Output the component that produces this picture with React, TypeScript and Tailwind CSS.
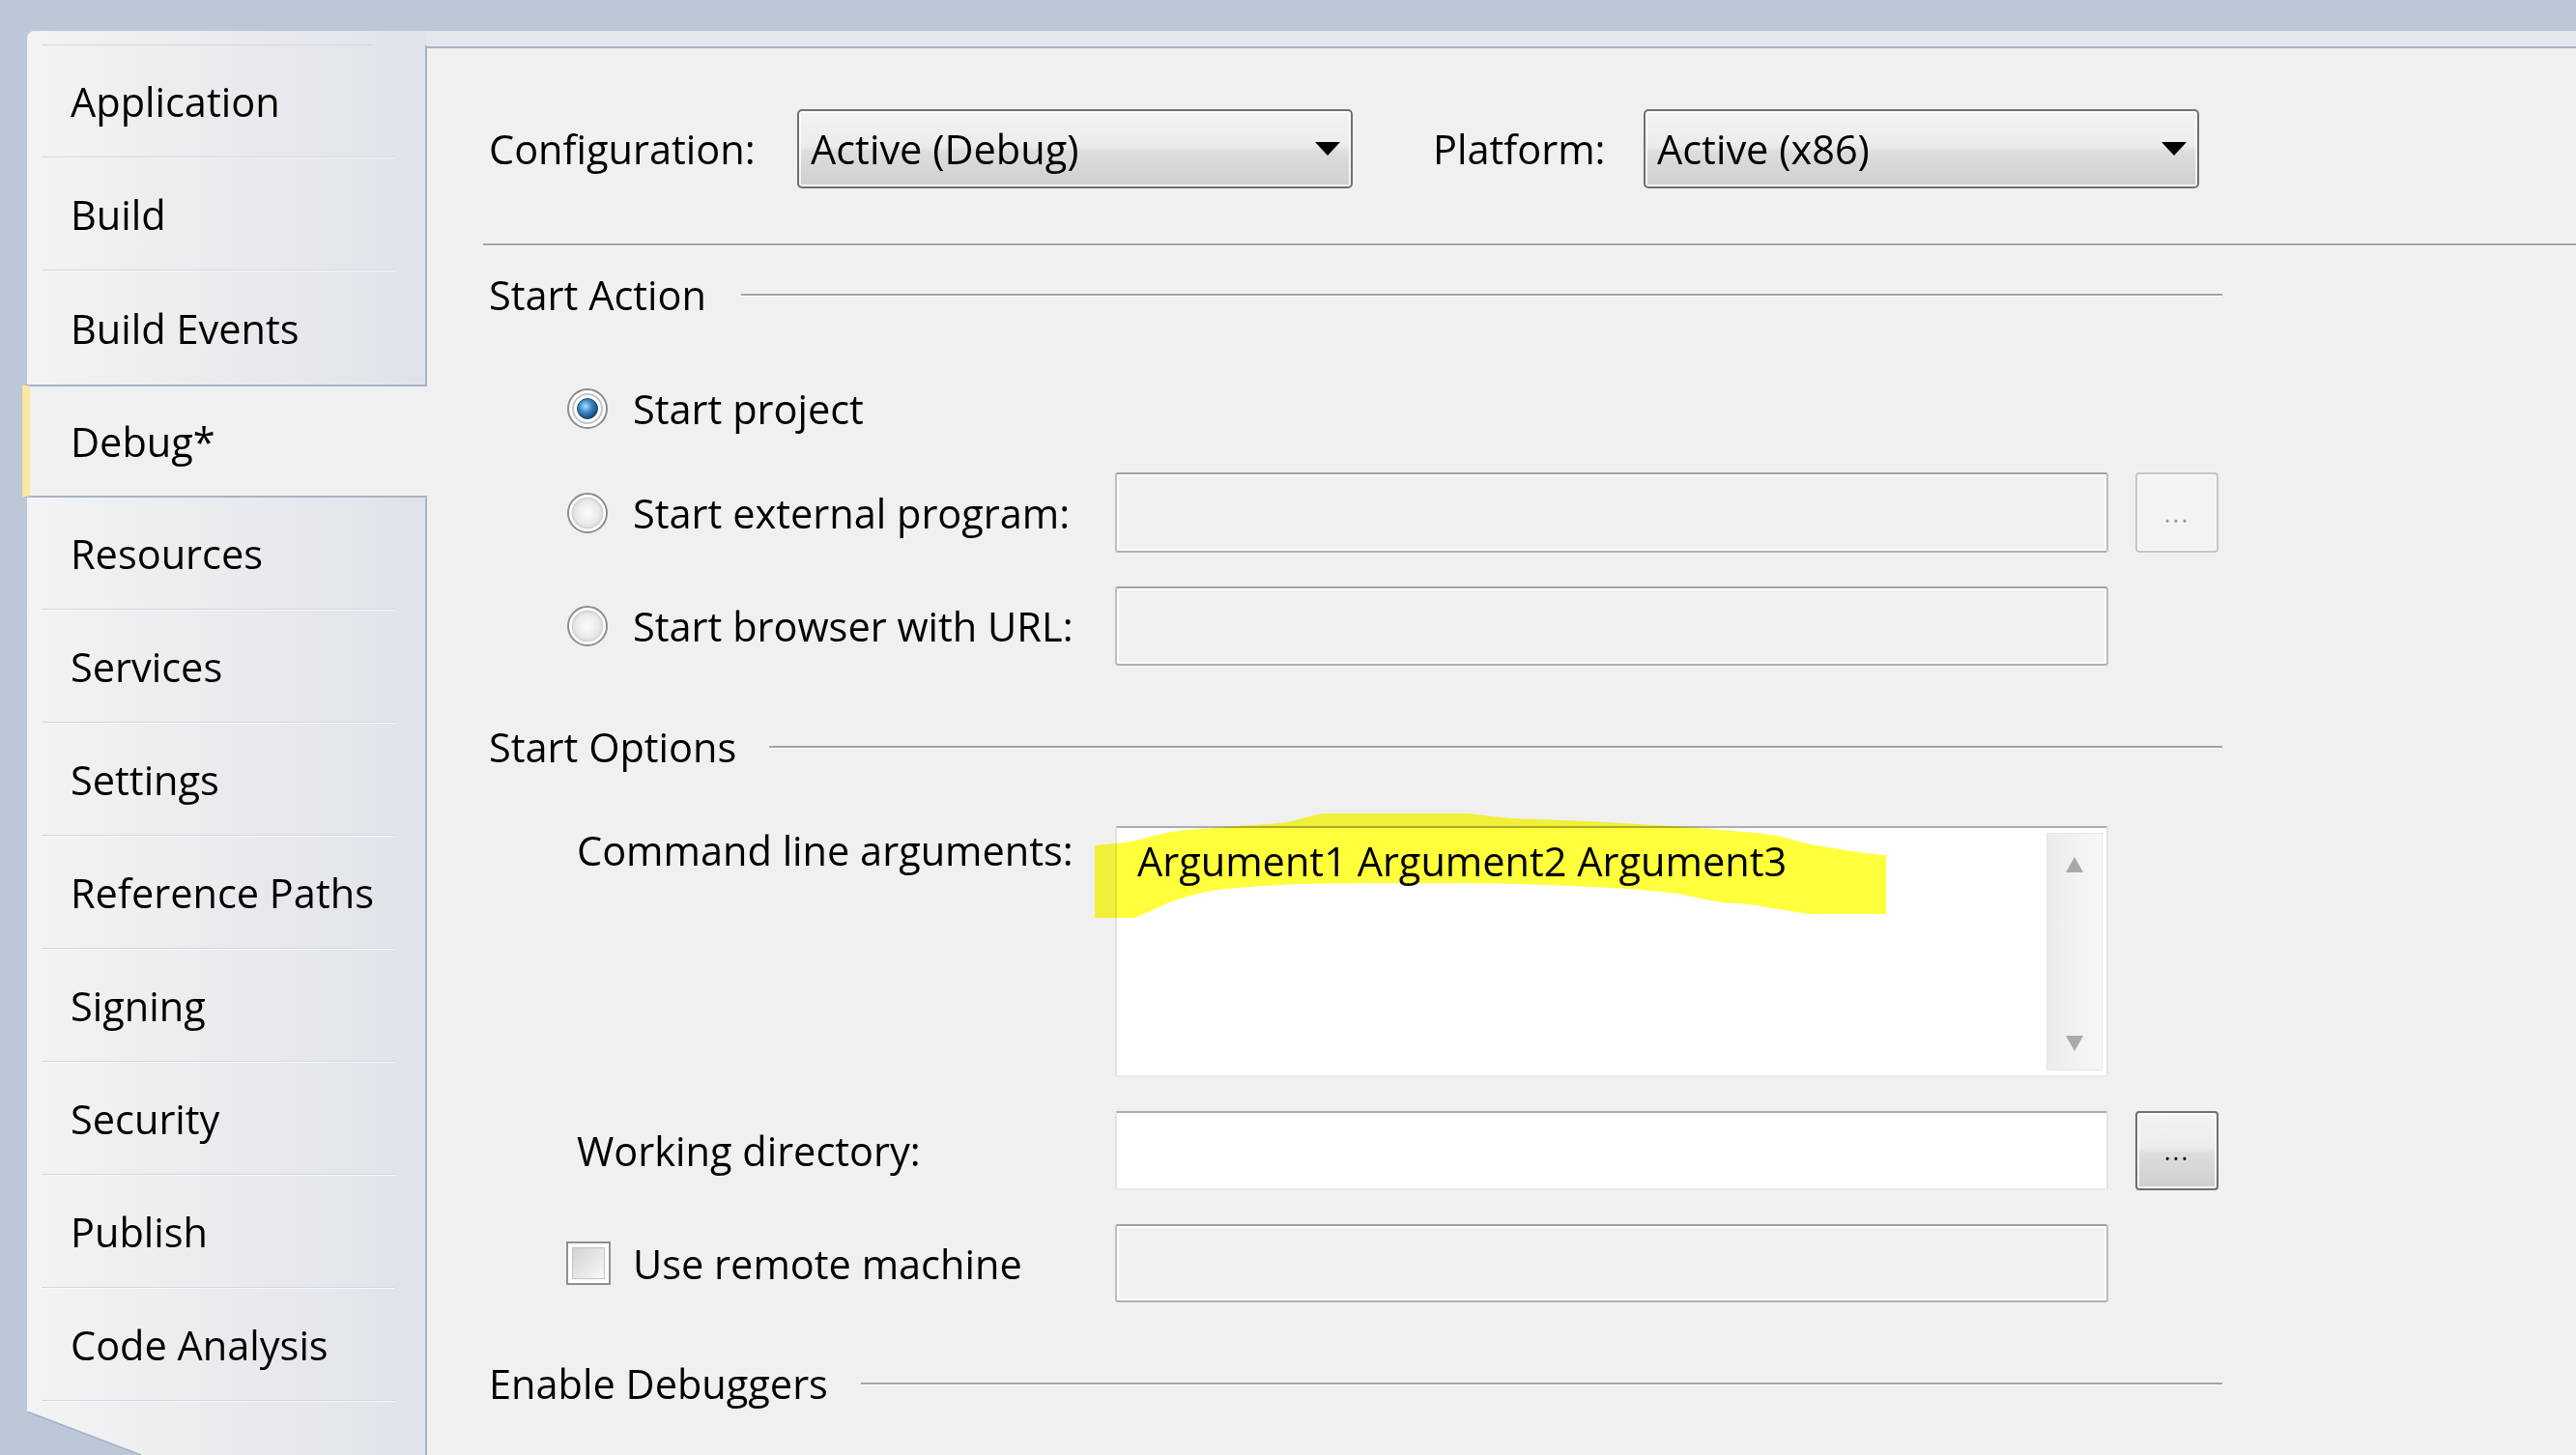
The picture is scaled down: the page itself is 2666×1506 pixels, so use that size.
import React from "react";

const ITEMS = [
  "Application",
  "Build",
  "Build Events",
  "Debug*",
  "Resources",
  "Services",
  "Settings",
  "Reference Paths",
  "Signing",
  "Security",
  "Publish",
  "Code Analysis",
];
const ACTIVE = 3;

function Sidebar() {
  return (
    <div className="relative w-[414px] h-full shrink-0 rounded-tl-[8px] bg-[linear-gradient(to_right,#f3f3f3,#dfe3e9)] flex flex-col">
      <div className="h-[15px] shrink-0 flex flex-col justify-end border-r-2 border-transparent">
        <div className="h-px ml-[15px] mr-[55px] bg-[#d3d8df]" />
      </div>
      {ITEMS.map((t, i) =>
        i === ACTIVE ? (
          <div
            key={t}
            className="h-[117px] shrink-0 -ml-[5px] w-[419px] rounded-l-[3px] border-y-2 border-[#a7b4c7] border-l-[8px] border-l-[#fbe6a2] bg-[#f0f0f0] flex items-center pl-[42px] whitespace-nowrap"
          >
            {t}
          </div>
        ) : (
          <div key={t} className="h-[117px] shrink-0 flex flex-col border-r-2 border-[#a7b4c7]">
            <div className="flex-1 flex items-center pl-[45px] whitespace-nowrap">{t}</div>
            {i !== ACTIVE - 1 && (
              <div className="h-[2px] ml-[15px] mr-[32px] border-t border-[#d2d7df] border-b border-b-[#f6f7f9]" />
            )}
          </div>
        )
      )}
      <div className="flex-1 border-r-2 border-[#a7b4c7]" />
      <svg className="absolute left-0 bottom-0" width="118" height="45" viewBox="0 0 118 45">
        <polygon points="0,0 118,45 0,45" fill="#bcc7d8" />
        <line x1="0" y1="0" x2="118" y2="45" stroke="#a2afc3" strokeWidth="1.5" />
      </svg>
    </div>
  );
}

function Combo({ text }: { text: string }) {
  return (
    <div className="w-[575px] h-[82px] shrink-0 rounded-[5px] border-2 border-[#707070] bg-[linear-gradient(to_bottom,#f3f3f3_0%,#ececec_46%,#dddddd_54%,#cfcfcf_100%)] shadow-[inset_0_0_0_2px_rgba(255,255,255,0.75)] flex items-center pl-[12px] pr-[11px]">
      <span className="flex-1 whitespace-nowrap">{text}</span>
      <svg width="26" height="14" viewBox="0 0 26 14">
        <path d="M0 0H26L13 14Z" fill="#000" />
      </svg>
    </div>
  );
}

function Etched() {
  return <div className="h-[3px] border-t-2 border-[#a3a3a3] border-b border-b-white" />;
}

function SectionHeader({ text, gap }: { text: string; gap: string }) {
  return (
    <div className="w-[1800px] h-[40px] flex items-center">
      <span className="ml-[6px] whitespace-nowrap">{text}</span>
      <div className={`flex-1 ${gap}`}>
        <Etched />
      </div>
    </div>
  );
}

function Radio({ checked }: { checked?: boolean }) {
  return (
    <svg width="44" height="44" viewBox="0 0 44 44" className="shrink-0">
      <defs>
        <radialGradient id="radioOff" cx="50%" cy="50%" r="55%">
          <stop offset="0%" stopColor="#fbfbfb" />
          <stop offset="70%" stopColor="#e9e9e9" />
          <stop offset="100%" stopColor="#cfcfcf" />
        </radialGradient>
        <radialGradient id="radioDot" cx="40%" cy="38%" r="65%">
          <stop offset="0%" stopColor="#b4dcf8" />
          <stop offset="45%" stopColor="#3f8ccd" />
          <stop offset="100%" stopColor="#123e68" />
        </radialGradient>
      </defs>
      <circle cx="22" cy="22" r="20" fill="#ffffff" stroke="#8d8d8d" strokeWidth="2" />
      {checked ? (
        <>
          <circle cx="22" cy="22" r="15" fill="#ffffff" stroke="#c4c4c4" strokeWidth="2" />
          <circle cx="22" cy="22" r="10.5" fill="url(#radioDot)" stroke="#1c4f7e" strokeWidth="1" />
        </>
      ) : (
        <circle cx="22" cy="22" r="16" fill="url(#radioOff)" stroke="#cdcdcd" strokeWidth="1" />
      )}
    </svg>
  );
}

function DisabledBox() {
  return (
    <div className="w-[1028px] h-full shrink-0 rounded-[3px] border-2 border-[#bcbcbc] border-t-[#a2a2a2] border-b-[#b0b0b0] bg-[#f0f0f0] shadow-[inset_0_0_0_2px_#ffffff]" />
  );
}

function EnabledBox() {
  return (
    <div className="w-[1028px] h-full shrink-0 rounded-[3px] border-2 border-[#e2e3ea] border-t-[#abadb3] border-b-[#e3e9ef] bg-white" />
  );
}

function Highlight() {
  return (
    <svg
      className="absolute left-[-23px] top-[-15px] pointer-events-none mix-blend-multiply"
      width="819"
      height="108"
      viewBox="0 0 819 108"
    >
      <path
        d="M0 33 C20 31 36 30 46 27 C66 22 80 18 98 17 C140 13 170 12 190 10 C210 8 222 2 236 0 L385 0 C400 1 415 4 431 5 C460 6 490 7 511 8 C560 11 600 13 626 15 C660 18 690 20 706 23 C720 26 730 30 741 32 C770 37 795 41 815 43 L819 43 L819 104 L741 104 C720 101 706 99 695 97 C680 94 665 93 649 92 C630 89 615 85 603 83 C580 80 560 78 534 77 C500 75 470 74 442 73 C400 72 360 72 327 72 C290 72 250 72 213 73 C170 75 140 77 121 80 C100 84 88 88 75 93 C62 99 52 104 41 108 L0 108 Z"
        fill="#ffff3c"
      />
    </svg>
  );
}

function Content() {
  return (
    <div className="flex-1 mt-[16px] bg-[#f0f0f0] border-t-2 border-[#a7b4c7] pl-[58px] flex flex-col">
      {/* Configuration / Platform */}
      <div className="mt-[63px] h-[82px] flex items-center">
        <div className="w-[325px] shrink-0 pl-[6px] whitespace-nowrap">Configuration:</div>
        <Combo text="Active (Debug)" />
        <div className="w-[301px] shrink-0 pl-[83px] whitespace-nowrap">Platform:</div>
        <Combo text="Active (x86)" />
      </div>

      <div className="mt-[57px]">
        <Etched />
      </div>

      {/* Start Action */}
      <div className="mt-[30px]">
        <SectionHeader text="Start Action" gap="ml-[36px]" />
      </div>

      <div className="mt-[76px] h-[44px] flex items-center pl-[86px]">
        <Radio checked />
        <span className="ml-[25px] whitespace-nowrap">Start project</span>
      </div>

      <div className="mt-[44px] h-[83px] flex items-center">
        <div className="w-[654px] shrink-0 flex items-center pl-[86px]">
          <Radio />
          <span className="ml-[25px] whitespace-nowrap">Start external program:</span>
        </div>
        <DisabledBox />
        <div className="ml-[28px] w-[86px] h-full shrink-0 rounded-[4px] border-2 border-[#c6c6c6] bg-[#f4f4f4] shadow-[inset_0_0_0_1px_#fbfbfb] flex items-center justify-center text-[26px] leading-[26px] tracking-[2px] text-[#9a9a9a]">
          ...
        </div>
      </div>

      <div className="mt-[35px] h-[82px] flex items-center">
        <div className="w-[654px] shrink-0 flex items-center pl-[86px]">
          <Radio />
          <span className="ml-[25px] whitespace-nowrap">Start browser with URL:</span>
        </div>
        <DisabledBox />
      </div>

      {/* Start Options */}
      <div className="mt-[64px]">
        <SectionHeader text="Start Options" gap="ml-[34px]" />
      </div>

      <div className="mt-[62px] h-[260px] flex items-start">
        <div className="w-[654px] shrink-0 pl-[97px] pt-[5px] whitespace-nowrap">Command line arguments:</div>
        <div className="relative w-[1028px] h-full shrink-0 rounded-[3px] border-2 border-[#e2e3ea] border-t-[#abadb3] border-b-[#e3e9ef] bg-white flex">
          <div className="flex-1 pl-[21px] pt-[14px] whitespace-nowrap">Argument1 Argument2 Argument3</div>
          <div className="w-[58px] my-[5px] mr-[4px] border border-[#e4e4e4] bg-[linear-gradient(to_right,#ececec,#f7f7f7)] flex flex-col items-center justify-between pt-[24px] pb-[19px]">
            <svg width="18" height="16" viewBox="0 0 18 16">
              <path d="M9 0L18 16H0Z" fill="#a9a9a9" />
            </svg>
            <svg width="18" height="16" viewBox="0 0 18 16">
              <path d="M0 0H18L9 16Z" fill="#a9a9a9" />
            </svg>
          </div>
          <Highlight />
        </div>
      </div>

      <div className="mt-[35px] h-[82px] flex items-center">
        <div className="w-[654px] shrink-0 pl-[97px] whitespace-nowrap">Working directory:</div>
        <EnabledBox />
        <div className="ml-[28px] w-[86px] h-full shrink-0 rounded-[4px] border-2 border-[#707070] bg-[linear-gradient(to_bottom,#f3f3f3_0%,#ececec_46%,#dddddd_54%,#cfcfcf_100%)] shadow-[inset_0_0_0_2px_rgba(255,255,255,0.75)] flex items-center justify-center text-[26px] leading-[26px] tracking-[2px] text-black">
          ...
        </div>
      </div>

      <div className="mt-[35px] h-[81px] flex items-center">
        <div className="w-[654px] shrink-0 flex items-center pl-[86px]">
          <div className="w-[46px] h-[45px] shrink-0 border-2 border-[#8e8f8f] bg-white p-[4px]">
            <div className="w-full h-full border border-[#c3c3c3] bg-[linear-gradient(135deg,#d3d3d3,#f8f8f8)]" />
          </div>
          <span className="ml-[23px] whitespace-nowrap">Use remote machine</span>
        </div>
        <DisabledBox />
      </div>

      {/* Enable Debuggers */}
      <div className="mt-[64px]">
        <SectionHeader text="Enable Debuggers" gap="ml-[34px]" />
      </div>
    </div>
  );
}

export default function App() {
  return (
    <div className="w-[2666px] h-[1506px] bg-[#bcc7d8] pl-[28px] pt-[32px] overflow-hidden font-['Open_Sans','Noto_Sans',sans-serif] text-[41.5px] leading-[40px] text-black">
      <div className="h-full flex bg-[#e3e6eb] rounded-tl-[8px]">
        <Sidebar />
        <Content />
      </div>
    </div>
  );
}
